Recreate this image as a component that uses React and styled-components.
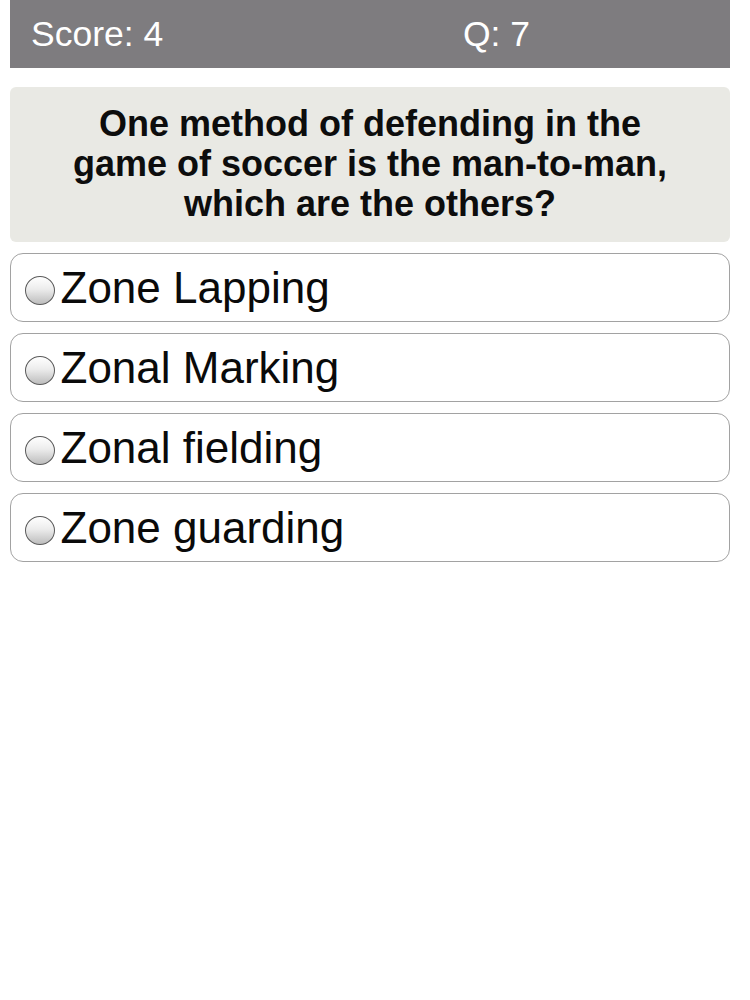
import styled, { createGlobalStyle } from "styled-components";

const GlobalStyle = createGlobalStyle`
    body {
        margin: 0;
        background: #ffffff;
        font-family: "Liberation Sans", Arial, Helvetica, sans-serif;
    }
`;

const Page = styled.div`
    width: 720px;
    margin-left: 10px;
`;

const Header = styled.div`
    height: 68px;
    background: #7e7c7f;
    display: grid;
    grid-template-columns: 432px auto;
    align-items: center;
    padding-left: 21px;
    color: #ffffff;
    font-size: 35.5px;
`;

const HeaderText = styled.span``;

const QuestionBox = styled.div`
    margin-top: 19px;
    background: #e9e9e4;
    border-radius: 6px;
    padding: 17px 10px 18px;
    text-align: center;
    font-size: 36px;
    line-height: 40px;
    font-weight: 700;
    color: #0d0d0d;
`;

const Options = styled.div`
    margin-top: 11px;
    display: flex;
    flex-direction: column;
    gap: 11px;
`;

const Option = styled.label`
    height: 69px;
    box-sizing: border-box;
    border: 1.5px solid #a2a2a2;
    border-radius: 13px;
    display: flex;
    align-items: center;
    gap: 6px;
    padding-left: 13.5px;
    cursor: pointer;
`;

const Radio = styled.span`
    width: 30px;
    height: 29px;
    box-sizing: border-box;
    margin-top: 6px;
    border-radius: 50%;
    border: 1.5px solid #5a5a5a;
    background: linear-gradient(to bottom, #ffffff 0%, #ececec 45%, #bdbdbd 100%);
    flex-shrink: 0;
`;

const OptionText = styled.span`
    font-size: 44px;
    color: #0a0a0a;
`;

const answers = ["Zone Lapping", "Zonal Marking", "Zonal fielding", "Zone guarding"];

const App = () => {
    return (
        <>
            <GlobalStyle />
            <Page>
                <Header>
                    <HeaderText>Score: 4</HeaderText>
                    <HeaderText>Q: 7</HeaderText>
                </Header>
                <QuestionBox>
                    One method of defending in the
                    <br />
                    game of soccer is the man-to-man,
                    <br />
                    which are the others?
                </QuestionBox>
                <Options>
                    {answers.map((a) => (
                        <Option key={a}>
                            <Radio />
                            <OptionText>{a}</OptionText>
                        </Option>
                    ))}
                </Options>
            </Page>
        </>
    );
};

export default App;
